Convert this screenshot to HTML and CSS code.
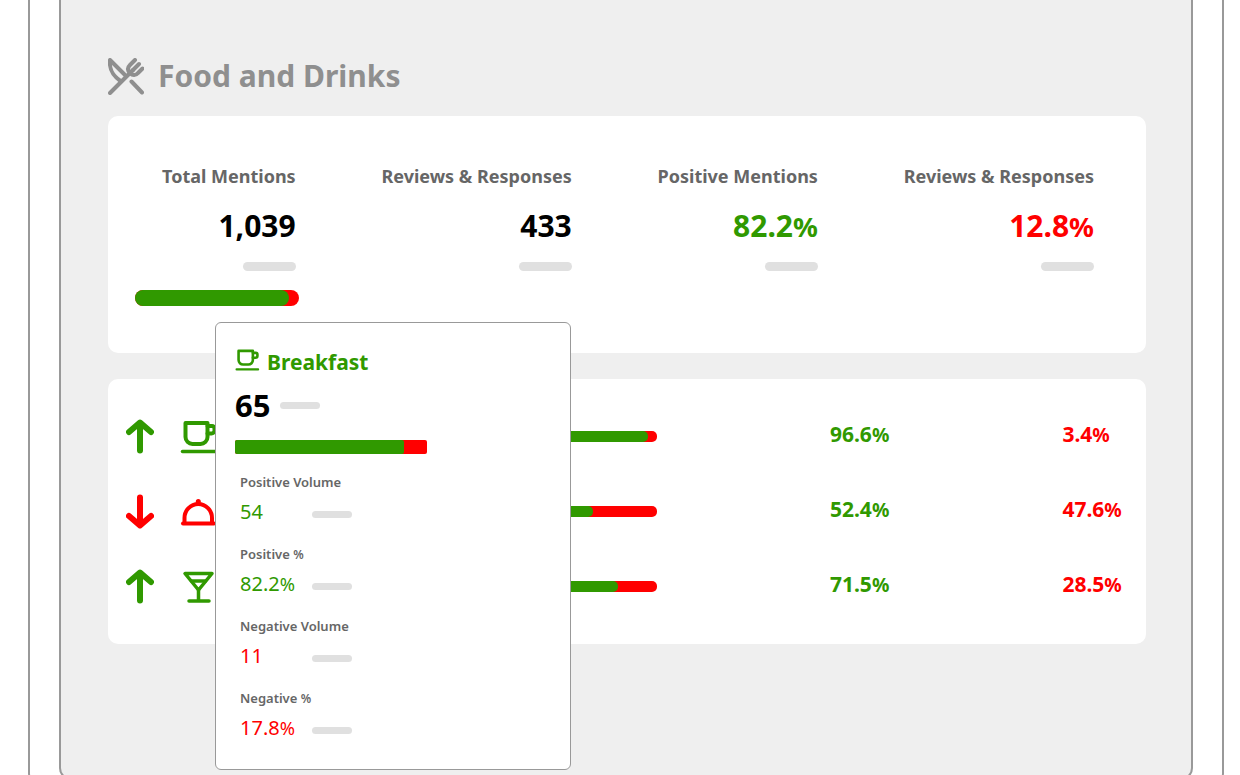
FILE: index.html
```html
<!DOCTYPE html>
<html lang="en">

<head>
    <meta charset="UTF-8">
    <meta name="viewport" content="width=device-width, initial-scale=1.0">
    <title>Food and Drinks</title>
    <link rel="stylesheet" href="styles.css">
</head>

<body>
    <svg width="0" height="0" class="sprite">
        <symbol id="icon-cup" viewBox="0 0 40 36">
            <g fill="none" stroke="currentColor" stroke-width="4" stroke-linecap="round" stroke-linejoin="round">
                <path d="M5.500 4h22v14a7 7 0 0 1-7 7h-8a7 7 0 0 1-7-7z" />
                <path d="M27.500 7h4.500a2.500 2.500 0 0 1 2.500 2.500v2a3 3 0 0 1-3 3h-4" />
                <path d="M2.500 32.500h33" stroke-width="3.500" />
            </g>
        </symbol>
        <symbol id="icon-arrow" viewBox="0 0 28 34">
            <path d="M14 31V4M3 12.500L14 3l11 9.500" fill="none" stroke="currentColor" stroke-width="6" stroke-linecap="round" stroke-linejoin="round" />
        </symbol>
    </svg>

    <div class="frame">
        <main class="screen">
            <h1>
                <svg class="title-icon" viewBox="0 0 36 37" fill="none" stroke="currentColor" stroke-width="4" stroke-linecap="round" stroke-linejoin="round">
                    <path d="M2 35L25 12" />
                    <path d="M23.500 23.500L34 34.500" />
                    <path d="M2 2l15 15M2 2c-1 9 2 15 10.500 21" />
                    <path d="M27 2l-5 5c-3 3-2.500 5.500 0 8s5.500 3 8 0l4.500-4.500M31 6l-6 6" />
                </svg>
                Food and Drinks
            </h1>

            <section class="card summary">
                <div class="stats">
                    <div class="stat">
                        <div class="stat-label">Total Mentions</div>
                        <div class="stat-value">1,039</div>
                        <div class="pill"></div>
                    </div>
                    <div class="stat">
                        <div class="stat-label">Reviews &amp; Responses</div>
                        <div class="stat-value">433</div>
                        <div class="pill"></div>
                    </div>
                    <div class="stat">
                        <div class="stat-label">Positive Mentions</div>
                        <div class="stat-value positive">82.2<span class="unit">%</span></div>
                        <div class="pill"></div>
                    </div>
                    <div class="stat">
                        <div class="stat-label">Reviews &amp; Responses</div>
                        <div class="stat-value negative">12.8<span class="unit">%</span></div>
                        <div class="pill"></div>
                    </div>
                </div>

                <div class="total">
                    <div class="bar bar-total">
                        <div class="bar-fill" style="width: 94%"></div>
                    </div>

                    <div class="popover">
                        <h2>
                            <svg class="popover-icon"><use href="#icon-cup" /></svg>
                            Breakfast
                        </h2>
                        <div class="popover-total">65 <div class="pill pill-small"></div></div>
                        <div class="bar bar-square">
                            <div class="bar-fill" style="width: 88%"></div>
                        </div>
                        <dl>
                            <dt>Positive Volume</dt>
                            <dd class="positive"><span>54</span><span class="pill pill-small"></span></dd>
                            <dt>Positive <span class="unit">%</span></dt>
                            <dd class="positive"><span>82.2<span class="unit">%</span></span><span class="pill pill-small"></span></dd>
                            <dt>Negative Volume</dt>
                            <dd class="negative"><span>11</span><span class="pill pill-small"></span></dd>
                            <dt>Negative <span class="unit">%</span></dt>
                            <dd class="negative"><span>17.8<span class="unit">%</span></span><span class="pill pill-small"></span></dd>
                        </dl>
                    </div>
                </div>
            </section>

            <section class="card categories">
                <table>
                    <tr>
                        <td class="col-trend positive"><svg class="arrow"><use href="#icon-arrow" /></svg></td>
                        <td class="col-icon positive"><svg class="category-icon"><use href="#icon-cup" /></svg></td>
                        <td class="col-bar">
                            <div class="bar"><div class="bar-fill" style="width: 97%"></div></div>
                        </td>
                        <td class="col-positive percent positive">96.6<span class="unit">%</span></td>
                        <td class="percent negative">3.4<span class="unit">%</span></td>
                    </tr>
                    <tr>
                        <td class="negative"><svg class="arrow arrow-down"><use href="#icon-arrow" /></svg></td>
                        <td class="negative">
                            <svg class="category-icon" viewBox="0 0 40 36" fill="none" stroke="currentColor" stroke-width="4" stroke-linecap="round" stroke-linejoin="round">
                                <path d="M3 29.500h31" />
                                <path d="M4.500 29v-5a13.700 14 0 0 1 27.500 0v5" />
                                <circle cx="18.300" cy="7.500" r="2.500" fill="currentColor" stroke="none" />
                            </svg>
                        </td>
                        <td>
                            <div class="bar"><div class="bar-fill" style="width: 79%"></div></div>
                        </td>
                        <td class="percent positive">52.4<span class="unit">%</span></td>
                        <td class="percent negative">47.6<span class="unit">%</span></td>
                    </tr>
                    <tr>
                        <td class="positive"><svg class="arrow"><use href="#icon-arrow" /></svg></td>
                        <td class="positive">
                            <svg class="category-icon" viewBox="0 0 40 36" fill="none" stroke="currentColor" stroke-width="3.500" stroke-linecap="round" stroke-linejoin="round">
                                <path d="M5 4.500h27L18.500 21z" />
                                <path d="M11.500 12h14M18.500 21v11M9 32h20" />
                            </svg>
                        </td>
                        <td>
                            <div class="bar"><div class="bar-fill" style="width: 87%"></div></div>
                        </td>
                        <td class="percent positive">71.5<span class="unit">%</span></td>
                        <td class="percent negative">28.5<span class="unit">%</span></td>
                    </tr>
                </table>
            </section>
        </main>
    </div>
</body>

</html>
```

FILE: styles.css
```css
:root {
    --green: #309900;
    --red: #ff0000;
    --grey: #666;
    --line: #999;
    --page: #efefef;
    --pill: #e0e0e0;
}

* {
    box-sizing: border-box;
}

body {
    margin: 0;
    height: 100vh;
    overflow: hidden;
    background-color: #fff;
    color: #000;
    font-family: "Noto Sans", "Open Sans", sans-serif;
}

.sprite {
    position: absolute;
}

.frame {
    margin: 0 16px 0 28px;
    padding: 0 29px 30px;
    border: 2px solid var(--line);
    border-top: none;
    border-radius: 0 0 40px 40px;
}

.screen {
    padding: 56px 45px 134px 47px;
    background-color: var(--page);
    border: 2px solid var(--line);
    border-top: none;
    border-radius: 0 0 12px 12px;
}

h1 {
    display: flex;
    align-items: center;
    gap: 14px;
    margin: 0 0 20px;
    color: #8f8f8f;
    font-size: 30px;
    line-height: 40px;
}

.title-icon {
    width: 36px;
    height: 37px;
}

.card {
    background-color: #fff;
    border-radius: 10px;
}

.positive {
    color: var(--green);
}

.negative {
    color: var(--red);
}

/* summary */
.summary {
    margin-bottom: 26px;
    padding: 48px 27px 47px;
}

.stats {
    display: flex;
    justify-content: space-between;
    padding: 0 25px 0 27px;
}

.stat {
    display: flex;
    flex-direction: column;
    align-items: flex-end;
}

.stat-label {
    color: var(--grey);
    font-size: 18px;
    font-weight: bold;
    line-height: 24px;
}

.stat-value {
    margin: 18px 0 16px;
    font-size: 30px;
    font-weight: bold;
    line-height: 40px;
}

.pill {
    width: 53px;
    height: 9px;
    border-radius: 5px;
    background-color: var(--pill);
}

.pill-small {
    width: 40px;
    height: 7px;
}

.unit {
    font-size: 92%;
    line-height: 1;
}

.total {
    position: relative;
    width: 164px;
    margin-top: 19px;
}

/* bars */
.bar {
    height: 11px;
    border-radius: 5px;
    background-color: var(--red);
}

.bar-fill {
    height: 100%;
    border-radius: inherit;
    background-color: var(--green);
}

.bar-total {
    height: 16px;
    border-radius: 8px;
}

.bar-square {
    width: 192px;
    height: 14px;
    border-radius: 2px;
}

/* popover */
.popover {
    position: absolute;
    top: 32px;
    left: 80px;
    width: 356px;
    padding: 24px 19px 27px;
    background-color: #fff;
    border: 1px solid var(--line);
    border-radius: 6px;
}

h2 {
    display: flex;
    align-items: center;
    gap: 6px;
    margin: 0;
    color: var(--green);
    font-size: 21px;
    line-height: 30px;
}

.popover-icon {
    width: 26px;
    height: 24px;
    margin-bottom: 4px;
}

.popover-total {
    display: flex;
    align-items: center;
    gap: 10px;
    margin: 8px 0 15px;
    font-size: 31px;
    font-weight: bold;
    line-height: 40px;
}

dl {
    margin: 20px 0 0 5px;
}

dt {
    color: var(--grey);
    font-size: 13px;
    font-weight: 600;
    line-height: 16px;
}

dd {
    display: grid;
    grid-template-columns: 72px 40px;
    align-items: center;
    margin: 8px 0 20px;
    font-size: 20px;
    line-height: 28px;
}

dd .pill {
    margin-top: 4px;
}

dd:last-child {
    margin-bottom: 0;
}

/* categories */
.categories {
    padding: 20px 18px;
}

table {
    width: 100%;
    table-layout: fixed;
    border-collapse: collapse;
}

td {
    height: 75px;
    padding: 0;
}

.percent {
    padding-bottom: 6px;
    font-size: 21px;
    font-weight: bold;
}

.col-trend {
    width: 54px;
}

.col-icon {
    width: 174px;
}

.col-bar {
    width: 47.5%;
}

.col-positive {
    width: 23.2%;
}

td .bar {
    width: 100%;
    max-width: 303px;
}

.arrow,
.category-icon {
    display: block;
}

.arrow {
    width: 28px;
    height: 35px;
}

.arrow-down {
    transform: rotate(180deg);
}

.category-icon {
    width: 40px;
    height: 36px;
}
```
